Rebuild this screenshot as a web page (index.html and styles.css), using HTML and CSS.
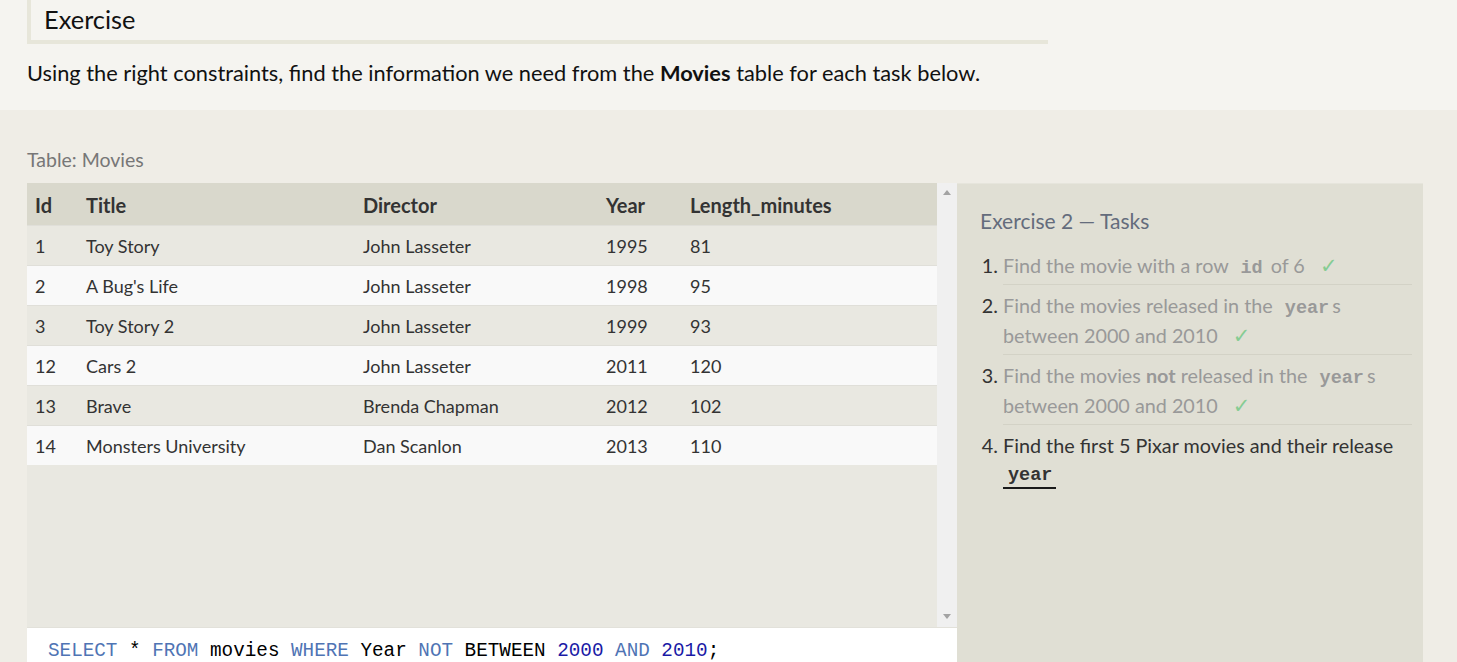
FILE: index.html
```html
<!DOCTYPE html>
<html>
<head>
<meta charset="utf-8">
<link rel="stylesheet" href="styles.css">
</head>
<body>
<div class="top">
  <div class="ex-head">Exercise</div>
  <p class="intro">Using the right constraints, find the information we need from the <b>Movies</b> table for each task below.</p>
</div>
<div class="lower">
  <div class="label">Table: Movies</div>
  <div class="work">
    <div class="left">
      <div class="tablebox">
        <div class="tablearea">
          <table class="movies">
            <thead>
              <tr><th class="c-id">Id</th><th class="c-title">Title</th><th class="c-dir">Director</th><th class="c-year">Year</th><th class="c-len">Length_minutes</th></tr>
            </thead>
            <tbody>
              <tr><td>1</td><td>Toy Story</td><td>John Lasseter</td><td>1995</td><td>81</td></tr>
              <tr><td>2</td><td>A Bug's Life</td><td>John Lasseter</td><td>1998</td><td>95</td></tr>
              <tr><td>3</td><td>Toy Story 2</td><td>John Lasseter</td><td>1999</td><td>93</td></tr>
              <tr><td>12</td><td>Cars 2</td><td>John Lasseter</td><td>2011</td><td>120</td></tr>
              <tr><td>13</td><td>Brave</td><td>Brenda Chapman</td><td>2012</td><td>102</td></tr>
              <tr><td>14</td><td>Monsters University</td><td>Dan Scanlon</td><td>2013</td><td>110</td></tr>
            </tbody>
          </table>
        </div>
        <div class="scrollbar">
          <span class="arrow up"></span>
          <span class="arrow down"></span>
        </div>
      </div>
      <div class="code"><span class="kw">SELECT</span> * <span class="kw">FROM</span> movies <span class="kw">WHERE</span> Year <span class="kw">NOT</span> BETWEEN <span class="num">2000</span> <span class="kw">AND</span> <span class="num">2010</span>;</div>
    </div>
    <div class="tasks">
      <div class="tasks-title">Exercise 2 — Tasks</div>
      <ol class="task-list">
        <li class="done">Find the movie with a row <code>id</code> of 6 <span class="check">✓</span></li>
        <li class="done">Find the movies released in the <code>year</code>s between 2000 and 2010 <span class="check">✓</span></li>
        <li class="done">Find the movies <b>not</b> released in the <code>year</code>s between 2000 and 2010 <span class="check">✓</span></li>
        <li class="current">Find the first 5 Pixar movies and their release <code class="ul">year</code></li>
      </ol>
    </div>
  </div>
</div>
</body>
</html>
```

FILE: styles.css
```css
html, body {
  margin: 0;
  padding: 0;
}
body {
  font-family: "Lato", "Open Sans", sans-serif;
  background: #efede6;
  color: #222;
  overflow: hidden;
  height: 662px;
}
.top {
  background: #f5f4f0;
  padding: 0 0 0 27px;
  height: 110px;
  box-sizing: border-box;
}
.ex-head {
  width: 1004px;
  border-left: 4px solid #e7e6da;
  border-bottom: 4px solid #e7e6da;
  height: 40px;
  box-sizing: content-box;
  padding-left: 13px;
  font-size: 25.4px;
  line-height: 38px;
  color: #111;
}
.intro {
  margin: 14px 0 0;
  font-size: 21.8px;
  line-height: 30px;
  color: #111;
}
.intro b {
  font-weight: 700;
}
.lower {
  padding: 36px 0 0 27px;
}
.label {
  font-size: 19.5px;
  line-height: 28px;
  color: #777;
  margin-bottom: 9px;
}
.work {
  display: flex;
  align-items: flex-start;
}
.left {
  width: 930px;
  display: flex;
  flex-direction: column;
}
.tablebox {
  display: flex;
  height: 444px;
  border-bottom: 1px solid #e2e1da;
}
.tablearea {
  flex: 1;
  background: #e9e8e1;
}
.movies {
  border-collapse: collapse;
  table-layout: fixed;
  width: 100%;
  font-size: 18px;
  color: #333;
}
.movies th,
.movies td {
  box-sizing: border-box;
}
.movies th {
  background: #d9d8cc;
  text-align: left;
  font-weight: 700;
  font-size: 20px;
  height: 42px;
  padding: 2px 0 0 8px;
  color: #333;
}
.movies td {
  height: 40px;
  padding: 1px 0 0 8px;
  border-top: 1px solid #e0dfd9;
}
.movies tbody tr:nth-child(even) td {
  background: #f9f9f9;
}
.c-id { width: 51px; }
.c-title { width: 277px; }
.c-dir { width: 243px; }
.c-year { width: 84px; }
.scrollbar {
  width: 20px;
  background: #f0f0f0;
  position: relative;
}
.arrow {
  position: absolute;
  left: 6px;
  width: 0;
  height: 0;
  border-left: 4px solid transparent;
  border-right: 4px solid transparent;
}
.arrow.up {
  top: 7px;
  border-bottom: 5px solid #a3a3a3;
}
.arrow.down {
  bottom: 8px;
  border-top: 5px solid #a3a3a3;
}
.code {
  background: #fff;
  height: 60px;
  padding: 9px 0 0 21px;
  font-family: "Liberation Mono", "DejaVu Sans Mono", monospace;
  font-size: 19.3px;
  line-height: 28px;
  color: #000;
  white-space: pre;
}
.code .kw { color: #4f74b4; }
.code .num { color: #1a1aa6; }
.tasks {
  width: 466px;
  height: 480px;
  background: #e0dfd4;
  border-top: 1px solid #e6e5dc;
  box-sizing: border-box;
  padding: 22px 11px 0 23px;
}
.tasks-title {
  font-size: 21px;
  line-height: 30px;
  color: #646c7c;
  margin-bottom: 9px;
}
.task-list {
  margin: 0;
  padding: 0 0 0 23px;
  font-size: 19.8px;
  line-height: 30px;
}
.task-list li {
  padding: 5px 0 3px;
  border-bottom: 1px solid #d3d2c6;
  color: #333;
}
.task-list li::marker {
  color: #333;
}
.task-list li.done {
  color: #999;
}
.task-list li.current {
  border-bottom: none;
}
.task-list code {
  font-family: "Liberation Mono", "DejaVu Sans Mono", monospace;
  font-weight: 700;
  font-size: 18.5px;
  line-height: 20px;
  padding: 0 3px 0 7px;
}
.task-list code.ul {
  display: inline-block;
  vertical-align: top;
  color: #333;
  padding: 8px 4px 3px 5px;
  line-height: 16px;
  border-bottom: 2px solid #1a1a1a;
}
.check {
  color: #86cc93;
  font-family: "DejaVu Sans", sans-serif;
  font-size: 21px;
  margin-left: 10px;
}
```
